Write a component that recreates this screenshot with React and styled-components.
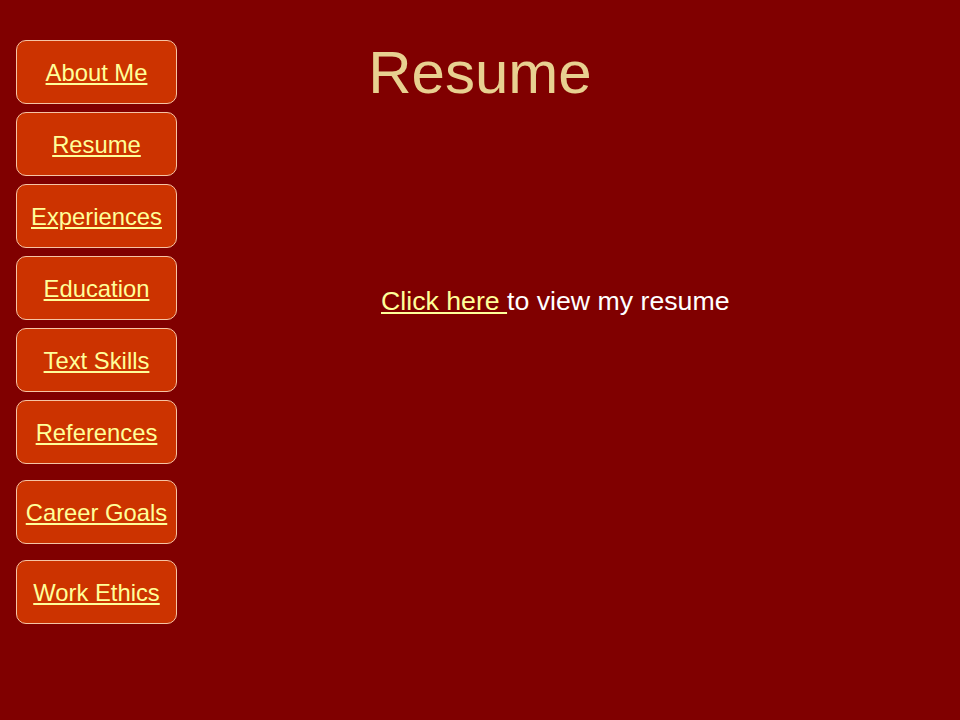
import React from "react";
import styled, { createGlobalStyle } from "styled-components";

const GlobalStyle = createGlobalStyle`
  html, body {
    margin: 0;
    padding: 0;
    background: #800000;
  }
  body {
    font-family: "Liberation Sans", Arial, sans-serif;
    min-height: 720px;
  }
`;

const NAV_ITEMS = [
  { label: "About Me", href: "#about" },
  { label: "Resume", href: "#resume" },
  { label: "Experiences", href: "#experiences" },
  { label: "Education", href: "#education" },
  { label: "Text Skills", href: "#skills" },
  { label: "References", href: "#references", spaced: true },
  { label: "Career Goals", href: "#goals", spaced: true },
  { label: "Work Ethics", href: "#ethics" },
];

const App = () => {
  return (
    <>
      <GlobalStyle />
      <Page>
        <Sidebar>
          {NAV_ITEMS.map((item) => (
            <NavButton key={item.label} $spaced={item.spaced}>
              <NavLink href={item.href}>{item.label}</NavLink>
            </NavButton>
          ))}
        </Sidebar>
        <Main>
          <Title>Resume</Title>
          <Blurb>
            <InlineLink href="#resume-file">Click here </InlineLink>
            to view my resume
          </Blurb>
        </Main>
      </Page>
    </>
  );
};

const Page = styled.div`
  display: grid;
  grid-template-columns: 176px 608px;
  min-height: 720px;
  background: #800000;
`;

const Sidebar = styled.nav`
  display: flex;
  flex-direction: column;
  padding: 40px 0 0 16px;
`;

const NavButton = styled.div`
  box-sizing: border-box;
  width: 161px;
  height: 64px;
  display: flex;
  align-items: center;
  justify-content: center;
  padding-top: 2px;
  background: #cc3300;
  border: 1px solid #f6c4a4;
  border-radius: 10px;
  margin-bottom: ${({ $spaced }) => ($spaced ? "16px" : "8px")};
`;

const NavLink = styled.a`
  color: #ffff99;
  font-size: 23.8px;
  text-decoration: underline;
  white-space: nowrap;
`;

const Main = styled.main`
  padding-top: 38px;
`;

const Title = styled.h1`
  margin: 0;
  text-align: center;
  font-size: 60px;
  font-weight: normal;
  line-height: 69px;
  color: #e8d090;
`;

const Blurb = styled.p`
  margin: 179px 0 0 205px;
  font-size: 26.7px;
  line-height: 31px;
  color: #ffffff;
  white-space: nowrap;
`;

const InlineLink = styled.a`
  color: #ffff99;
  text-decoration: underline;
  white-space: pre;
`;

export default App;
